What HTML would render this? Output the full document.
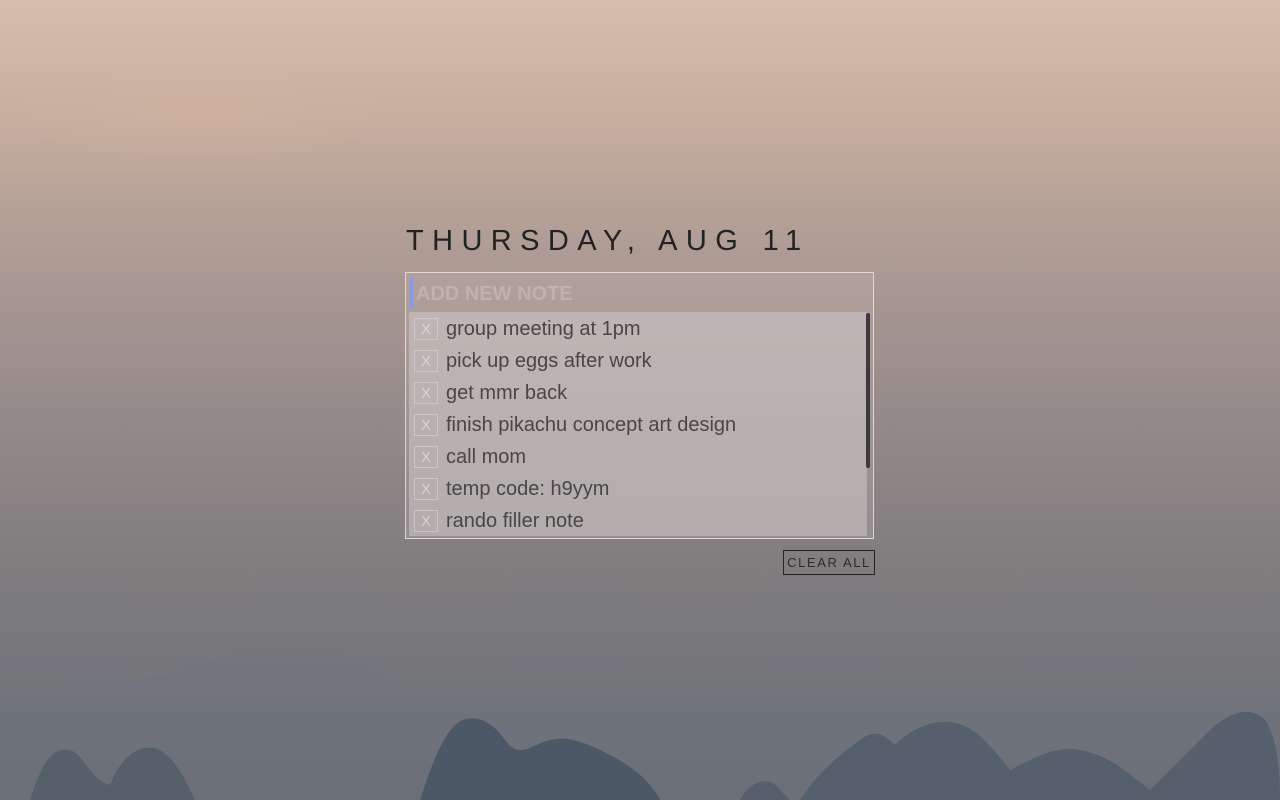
<!DOCTYPE html>
<html><head><style>
html,body{margin:0;width:1280px;height:800px;overflow:hidden}
body{position:relative;font-family:"Liberation Sans",Arial,sans-serif;
background:linear-gradient(180deg,#d7bdab 0%,#c7ae9f 15%,#b09d95 30%,#9d908d 45%,#8b8485 60%,#7c7a7d 75%,#6f7379 90%,#6a6f76 100%);}
.glow{position:absolute;left:0;top:70px;width:400px;height:90px;background:radial-gradient(ellipse at center,rgba(230,190,160,.18),rgba(0,0,0,0) 70%)}
h1{position:absolute;left:406px;top:225px;margin:0;font-weight:400;font-size:29px;letter-spacing:8.4px;color:#222;line-height:32px;white-space:nowrap}
.box{position:absolute;left:405px;top:272px;width:467px;height:265px;border:1px solid rgba(235,230,230,.8);background:rgba(200,185,185,.25)}
.inp{position:absolute;left:4px;top:4px;width:458px;height:32px;border-left:3px solid #8a9ad8;box-sizing:border-box;padding-left:3px;font-size:20px;line-height:34px;color:rgba(215,200,200,.45);font-weight:700;}
.list{position:absolute;left:3px;top:39px;width:458px;height:224px;background:rgba(215,210,210,.45);overflow:hidden}
.sb{position:absolute;left:460px;top:40px;width:4px;height:155px;background:#3c3a3b;border-radius:2px}
.it{position:absolute;left:0;height:32px;width:450px}
.x{position:absolute;left:5px;top:6px;width:22px;height:20px;border:1px solid rgba(225,220,220,.5);color:rgba(230,225,225,.7);font-size:15px;text-align:center;line-height:21px}
.t{position:absolute;left:37px;top:4px;font-size:20px;color:#484646;line-height:26px;white-space:nowrap}
.clr{position:absolute;left:783px;top:550px;width:90px;height:23px;border:1px solid #222;font-size:13px;letter-spacing:1.6px;color:#2b2b2b;text-align:center;line-height:24px;box-sizing:content-box}
svg{position:absolute;left:0;bottom:0}
</style></head><body>
<div class="glow"></div>
<svg width="1280" height="170" viewBox="0 630 1280 170">
<path fill="#6e7580" opacity=".2" d="M0 700 C60 680 120 690 180 670 C240 650 300 640 360 660 L420 700 C500 690 560 680 620 700 C720 690 800 700 900 690 C1000 700 1100 690 1200 700 L1280 690 L1280 800 L0 800Z"/>
<path fill="#56606b" d="M30 800 C40 770 50 745 70 750 C85 755 90 780 110 785 C120 760 135 745 155 748 C175 755 185 780 195 800Z"/>
<path fill="#4d5866" d="M420 800 C430 770 440 740 455 725 C470 712 490 718 505 740 C520 760 530 745 550 740 C570 735 590 745 610 755 C630 765 650 780 660 800Z"/>
<path fill="#55606c" d="M740 800 C750 780 770 775 780 790 L790 800Z M800 800 C820 770 840 755 860 740 C875 728 885 735 895 745 C910 730 930 720 950 722 C975 725 990 745 1010 770 C1030 760 1055 745 1080 750 C1110 755 1130 775 1150 790 C1170 770 1190 750 1210 730 C1230 712 1250 705 1265 720 C1275 735 1280 760 1280 800Z"/>
</svg>
<h1>THURSDAY, AUG 11</h1>
<div class="box">
<div class="inp">ADD NEW NOTE</div>
<div class="list">
<div class="it" style="top:0"><div class="x">X</div><div class="t">group meeting at 1pm</div></div>
<div class="it" style="top:32px"><div class="x">X</div><div class="t">pick up eggs after work</div></div>
<div class="it" style="top:64px"><div class="x">X</div><div class="t">get mmr back</div></div>
<div class="it" style="top:96px"><div class="x">X</div><div class="t">finish pikachu concept art design</div></div>
<div class="it" style="top:128px"><div class="x">X</div><div class="t">call mom</div></div>
<div class="it" style="top:160px"><div class="x">X</div><div class="t">temp code: h9yym</div></div>
<div class="it" style="top:192px"><div class="x">X</div><div class="t">rando filler note</div></div>
</div>
<div class="sb"></div>
</div>
<div class="clr">CLEAR ALL</div>
</body></html>
